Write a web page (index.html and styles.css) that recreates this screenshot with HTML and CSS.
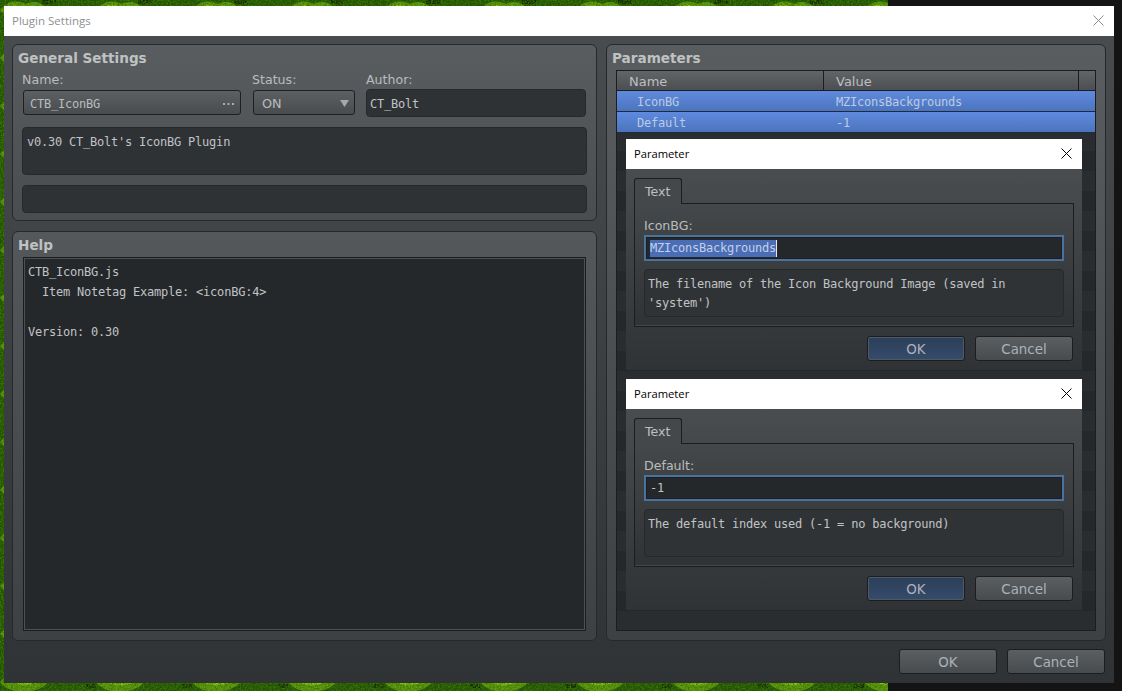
FILE: index.html
```html
<!DOCTYPE html>
<html lang="en">
<head>
<meta charset="utf-8">
<title>Plugin Settings</title>
<link rel="stylesheet" href="styles.css">
</head>
<body>
<svg class="foliage" width="1122" height="691" aria-hidden="true">
  <defs>
    <pattern id="leaf" width="96" height="48" patternUnits="userSpaceOnUse">
      <rect width="96" height="48" fill="#1f5208"/>
      <path d="M0 10 C8 0 18 0 26 4 C34 0 42 2 48 10 C40 22 10 24 0 10 Z" fill="#5f9e10"/>
      <path d="M8 7 C14 3 20 5 24 8 C30 4 36 5 40 9 C30 15 16 15 8 7 Z" fill="#8cc41a"/>
      <path d="M48 34 C56 24 66 24 74 28 C82 24 90 26 96 34 C88 46 58 48 48 34 Z" fill="#5f9e10"/>
      <path d="M56 31 C62 27 68 29 72 32 C78 28 84 29 88 33 C78 39 64 39 56 31 Z" fill="#8cc41a"/>
      <path d="M42 0 H56 V4 H42 Z M86 12 H96 V16 H86 Z" fill="#0f3004"/>
    </pattern>
    <filter id="speckle" x="0" y="0" width="100%" height="100%">
      <feTurbulence type="fractalNoise" baseFrequency="0.6" numOctaves="2" seed="4"/>
      <feColorMatrix type="matrix" values="0 0 0 0 0.05  0 0 0 0 0.18  0 0 0 0 0  2.4 0 0 0 -0.85"/>
    </filter>
  </defs>
  <rect width="1122" height="691" fill="url(#leaf)"/>
  <rect width="1122" height="691" filter="url(#speckle)"/>
</svg>
<div class="black-side"></div>

<div class="window">
  <header class="titlebar main-title">
    <span>Plugin Settings</span>
    <svg class="close" width="11" height="11" viewBox="0 0 11 11"><path d="M0.5 0.5 L10.5 10.5 M10.5 0.5 L0.5 10.5" stroke="#8a8a8a" fill="none"/></svg>
  </header>
  <div class="content">
    <div class="columns">
      <div class="left-col">
        <section class="group general">
          <h2>General Settings</h2>
          <div class="general-row">
            <div class="field name-field">
              <label>Name:</label>
              <div class="combo"><span>CTB_IconBG</span><svg class="dots" width="11" height="2" viewBox="0 0 11 2"><path d="M0 0 H2 V2 H0 Z M4.5 0 H6.5 V2 H4.5 Z M9 0 H11 V2 H9 Z" fill="#a9acae"/></svg></div>
            </div>
            <div class="field status-field">
              <label>Status:</label>
              <div class="combo status"><span>ON</span><svg width="9" height="7" viewBox="0 0 9 7"><path d="M0 0 H9 L4.5 7 Z" fill="#a4a8aa"/></svg></div>
            </div>
            <div class="field author-field">
              <label>Author:</label>
              <div class="input">CT_Bolt</div>
            </div>
          </div>
          <div class="input desc">v0.30 CT_Bolt's IconBG Plugin</div>
          <div class="input empty"></div>
        </section>
        <section class="group help">
          <h2>Help</h2>
          <pre class="help-text">CTB_IconBG.js
  Item Notetag Example: &lt;iconBG:4&gt;

Version: 0.30</pre>
        </section>
      </div>
      <section class="group params">
        <h2>Parameters</h2>
        <div class="table">
          <div class="thead">
            <div class="th th-name">Name</div>
            <div class="th th-value">Value</div>
            <div class="th th-end"></div>
          </div>
          <div class="row"><span class="c1">IconBG</span><span>MZIconsBackgrounds</span></div>
          <div class="row"><span class="c1">Default</span><span>-1</span></div>

          <div class="dialog first">
            <header class="titlebar dlg-title">
              <span>Parameter</span>
              <svg width="11" height="11" viewBox="0 0 11 11"><path d="M0.5 0.5 L10.5 10.5 M10.5 0.5 L0.5 10.5" stroke="#000" fill="none"/></svg>
            </header>
            <div class="dlg-body">
              <div class="tab">Text</div>
              <div class="pane">
                <label>IconBG:</label>
                <div class="edit"><span class="sel">MZIconsBackgrounds</span></div>
                <div class="input note">The filename of the Icon Background Image (saved in<br>'system')</div>
              </div>
              <div class="dlg-buttons">
                <button class="btn primary">OK</button>
                <button class="btn">Cancel</button>
              </div>
            </div>
          </div>

          <div class="dialog second">
            <header class="titlebar dlg-title">
              <span>Parameter</span>
              <svg width="11" height="11" viewBox="0 0 11 11"><path d="M0.5 0.5 L10.5 10.5 M10.5 0.5 L0.5 10.5" stroke="#000" fill="none"/></svg>
            </header>
            <div class="dlg-body">
              <div class="tab">Text</div>
              <div class="pane">
                <label>Default:</label>
                <div class="edit"><span>-1</span></div>
                <div class="input note">The default index used (-1 = no background)</div>
              </div>
              <div class="dlg-buttons">
                <button class="btn primary">OK</button>
                <button class="btn">Cancel</button>
              </div>
            </div>
          </div>
        </div>
      </section>
    </div>
    <div class="footer">
      <button class="btn">OK</button>
      <button class="btn">Cancel</button>
    </div>
  </div>
</div>
</body>
</html>
```
FILE: styles.css
```css
* { box-sizing: border-box; }
html, body { margin: 0; padding: 0; }
body {
  width: 1122px;
  height: 691px;
  overflow: hidden;
  position: relative;
  font-family: "DejaVu Sans", sans-serif;
  font-size: 13px;
  color: #b9bcbe;
  padding: 6px 0 0 4px;
}
.foliage { position: absolute; left: 0; top: 0; }
.black-side {
  position: absolute;
  left: 888px;
  top: 0;
  width: 234px;
  height: 691px;
  background: #141414;
}
.window {
  position: relative;
  width: 1110px;
  height: 677px;
  display: flex;
  flex-direction: column;
  background: linear-gradient(#4a4d4f, #303336);
}
.titlebar {
  background: #fff;
  height: 30px;
  display: flex;
  align-items: center;
  justify-content: space-between;
  flex: none;
}
.main-title {
  padding: 0 10px 2px 8px;
  color: #8c8f92;
  font-family: "Open Sans", sans-serif;
  font-size: 11.5px;
}
.dlg-title {
  padding: 0 10px 2px 8px;
  color: #000;
  font-family: "Open Sans", sans-serif;
  font-size: 11.2px;
}
.content {
  flex: 1;
  display: flex;
  flex-direction: column;
  padding: 8px 8px 9px 8px;
}
.columns { display: flex; gap: 9px; }
.left-col { width: 585px; display: flex; flex-direction: column; gap: 10px; }
.group {
  border: 1px solid #26292b;
  border-radius: 6px;
  padding: 5px 9px 8px 9px;
}
.group h2 {
  margin: 0 0 0 -4px;
  font-size: 13.6px;
  line-height: 16px;
  font-weight: bold;
  color: #bfc2c3;
}
.general { height: 177px; background: linear-gradient(#5a5d5f, #4a4d4f); }
.general-row { display: flex; margin-top: 6px; margin-bottom: 10px; }
.field label { display: block; font-size: 12.6px; line-height: 15px; margin-bottom: 2px; }
.name-field { width: 230px; }
.status-field { width: 114px; }
.author-field { width: 220px; }
.name-field .combo { margin-left: 1px; width: 218px; }
.status-field .combo { width: 102px; margin-left: 1px; }
.combo {
  height: 25px;
  margin-top: 3px;
  border: 1px solid #1d1f21;
  border-radius: 3px;
  background: linear-gradient(#5d6062, #494c4e);
  display: flex;
  align-items: center;
  justify-content: space-between;
  padding: 2px 6px 0;
  font-family: "DejaVu Sans Mono", monospace;
  font-size: 12px;
  letter-spacing: -0.22px;
}
.combo.status { font-family: "DejaVu Sans", sans-serif; font-size: 12.8px; letter-spacing: 0; padding: 2px 5px 0 8px; }
.input {
  background: #2f3235;
  border: 1px solid #26282a;
  border-radius: 4px;
  font-family: "DejaVu Sans Mono", monospace;
  font-size: 12px;
  letter-spacing: -0.22px;
  line-height: 19px;
  color: #c0c3c5;
}
.author-field .input { height: 28px; margin-top: 2px; padding: 5px 3px; }
.desc { height: 48px; padding: 5px 4px; }
.empty { height: 28px; margin-top: 10px; }
.help {
  height: 410px;
  background: linear-gradient(#55585a, #3e4144);
  padding-bottom: 9px;
  display: flex;
  flex-direction: column;
}
.help-text {
  flex: 1;
  margin: 4px 1px 0 1px;
  border: 1px solid #1a1c1e;
  outline: 1px solid #4d5052;
  outline-offset: -2px;
  background: #25282b;
  font-family: "DejaVu Sans Mono", monospace;
  font-size: 12px;
  letter-spacing: -0.22px;
  line-height: 20px;
  padding: 4px 4px;
  color: #c0c3c5;
}
.params {
  width: 500px;
  height: 597px;
  display: flex;
  flex-direction: column;
  background: linear-gradient(#5a5d5f, #3e4144);
}
.table {
  position: relative;
  height: 561px;
  margin-top: 4px;
  border: 1px solid #1b1d1f;
  background: repeating-linear-gradient(#25282a 0, #25282a 20px, #2a2d2f 20px, #2a2d2f 40px);
}
.thead {
  display: flex;
  height: 20px;
  border-bottom: 1px solid #1b1d1f;
  background: linear-gradient(#626567, #4c4f51);
  font-size: 13px;
  line-height: 22px;
  color: #bcbfc1;
}
.th { padding-left: 12px; border-right: 1px solid #1b1d1f; }
.th-name { width: 207px; }
.th-value { width: 255px; }
.th-end { flex: 1; border-right: 0; }
.row {
  display: flex;
  height: 21px;
  border-bottom: 1px solid #1f2a3e;
  background: linear-gradient(#5f8ade, #4c74bd);
  font-family: "DejaVu Sans Mono", monospace;
  font-size: 12px;
  letter-spacing: -0.22px;
  line-height: 23px;
  color: #bccbe4;
}
.row .c1 { width: 207px; padding-left: 20px; }
.row span:last-child { padding-left: 12px; }
.dialog {
  position: absolute;
  left: 9px;
  width: 456px;
  height: 231px;
  display: flex;
  flex-direction: column;
}
.dialog.first { top: 68px; }
.dialog.second { top: 308px; }
.dlg-body {
  flex: 1;
  padding: 9px 8px 0 8px;
  background: linear-gradient(#4a4d4f, #303336);
}
.tab {
  width: 48px;
  height: 26px;
  border: 1px solid #1b1d1f;
  border-bottom: 0;
  border-radius: 3px 3px 0 0;
  background: #45484a;
  position: relative;
  z-index: 1;
  margin-bottom: -1px;
  font-size: 12.6px;
  line-height: 25px;
  padding-left: 10px;
  color: #bcbfc1;
}
.pane {
  height: 124px;
  border: 1px solid #1b1d1f;
  background: linear-gradient(#45484a, #303336);
  padding: 14px 9px 0 9px;
  box-shadow: inset 0 -1px 0 #45484a;
}
.pane label { display: block; font-size: 12.6px; line-height: 15px; }
.edit {
  height: 26px;
  margin-top: 2px;
  border: 2px solid #4a729f;
  background: #25282b;
  padding: 3px 4px;
  font-family: "DejaVu Sans Mono", monospace;
  font-size: 12px;
  letter-spacing: -0.22px;
  line-height: 17px;
  color: #c0c3c5;
  box-shadow: inset 0 0 0 1px #1d2022;
}
.sel { background: #4a6db5; color: #c3d0e8; display: inline-block; height: 17px; border-right: 1px solid #e8e8e8; }
.note { height: 48px; margin-top: 8px; padding: 5px 3px 0; line-height: 19px; background: #303336; }
.dlg-buttons { display: flex; justify-content: flex-end; gap: 10px; margin-top: 9px; padding-right: 1px; }
.btn {
  width: 98px;
  height: 25px;
  padding: 2px 0 0;
  border: 1px solid #1b1d1f;
  border-radius: 3px;
  background: linear-gradient(#5c5f61, #484b4d);
  font-family: "DejaVu Sans", sans-serif;
  font-size: 13.4px;
  color: #a9b3ba;
}
.btn.primary {
  background: linear-gradient(#2c3f59, #364b6b);
  box-shadow: inset 0 0 0 1px #4e5a68;
}
.footer { display: flex; justify-content: flex-end; gap: 10px; margin-top: 8px; margin-right: 1px; }
```
